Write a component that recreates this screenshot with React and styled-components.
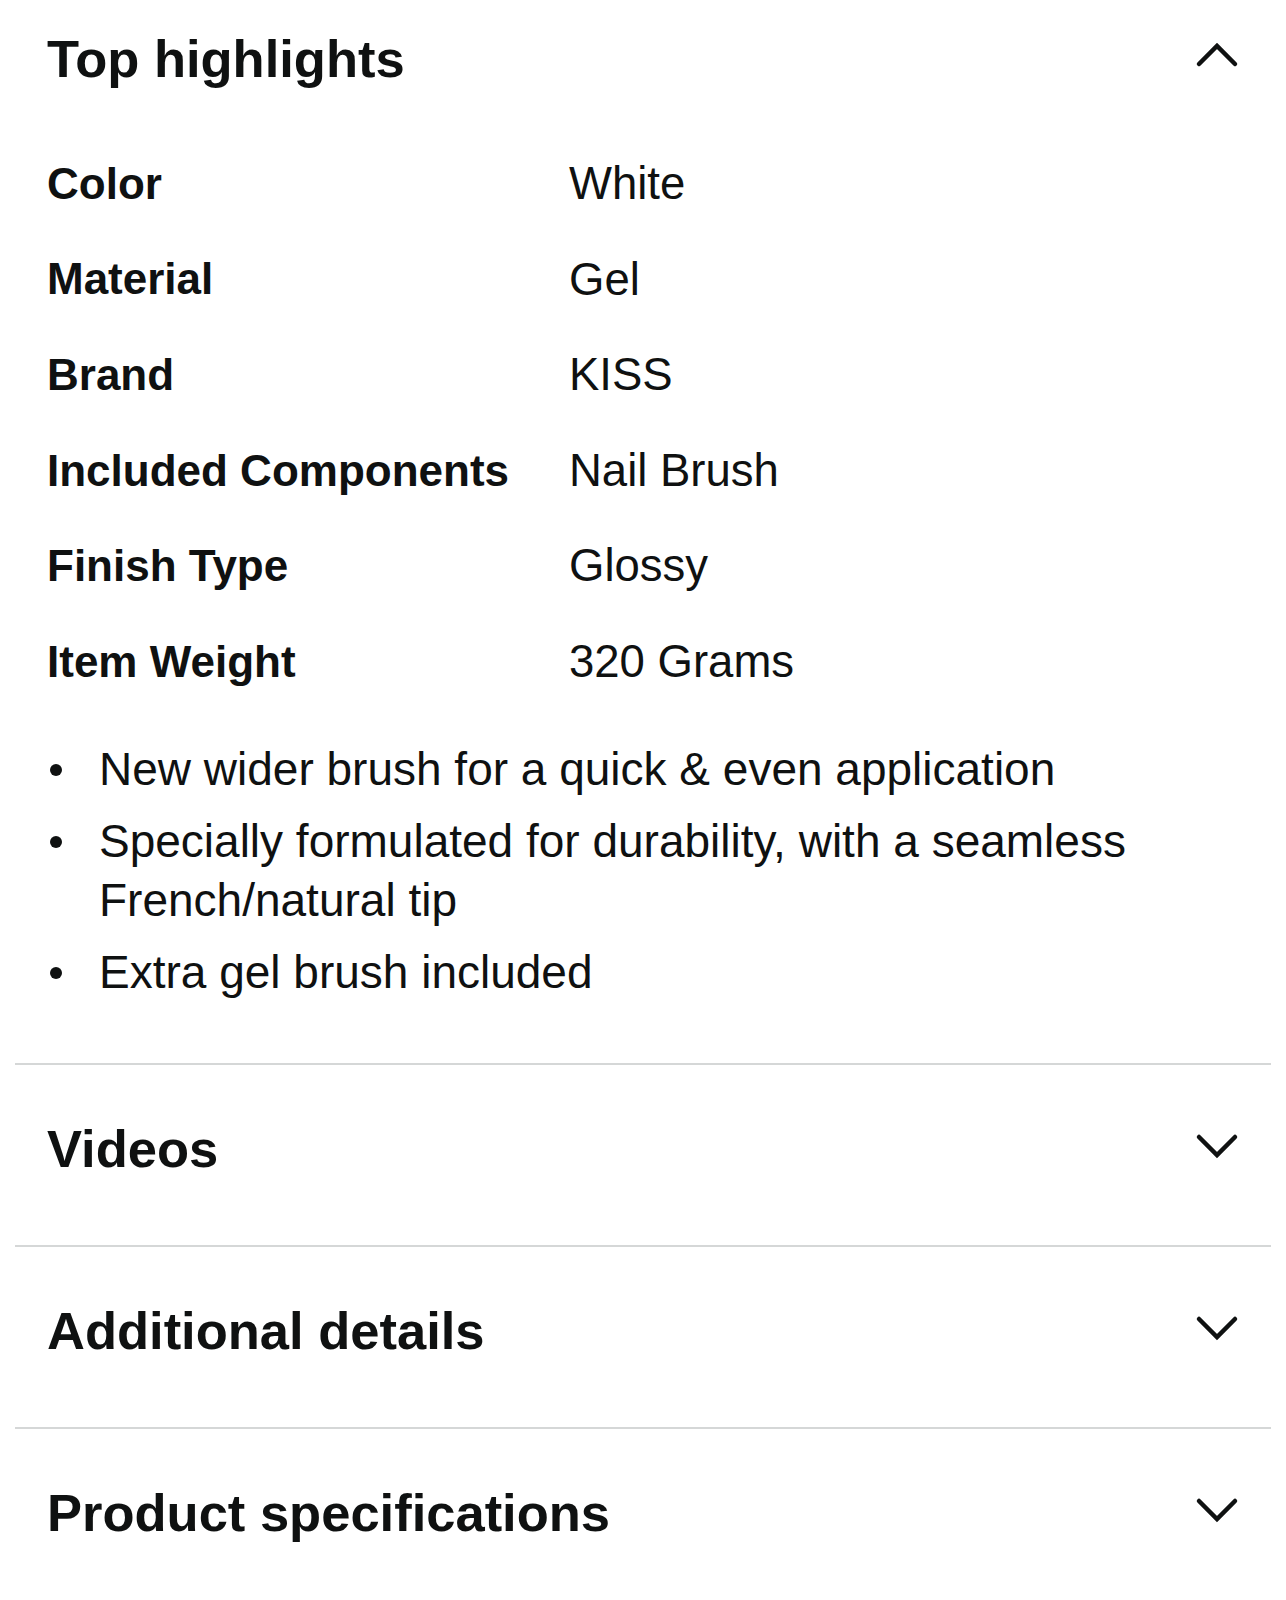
import React from "react";
import styled, { createGlobalStyle } from "styled-components";

const GlobalStyle = createGlobalStyle`
  * {
    box-sizing: border-box;
  }

  body {
    margin: 0;
    background: #ffffff;
    color: #0f1111;
    font-family: "Liberation Sans", Arial, sans-serif;
  }
`;

const Page = styled.main`
  width: 1286px;
  padding: 0 15px;
`;

const Section = styled.section`
  border-top: ${({ $first }) => ($first ? "none" : "2px solid #d5d7d7")};
  padding: 0 32px ${({ $open }) => ($open ? "61px" : "0")};
`;

const Header = styled.div`
  display: flex;
  align-items: center;
  justify-content: space-between;
  height: ${({ $open }) => ($open ? "116px" : "180px")};
  padding-bottom: ${({ $open }) => ($open ? "0" : "12px")};
`;

const Heading = styled.h2`
  margin: 0;
  font-size: 52.5px;
  font-weight: 700;
  line-height: 1.2;
  color: #0f1111;
`;

const Chevron = styled.svg`
  width: 44px;
  height: 28px;
  flex-shrink: 0;
  margin-top: ${({ $up }) => ($up ? "-8px" : "-6px")};
`;

const SpecTable = styled.div`
  margin-top: 20px;
  display: grid;
  grid-template-columns: 522px 1fr;
  grid-auto-rows: 95.6px;
  align-items: center;
`;

const Label = styled.div`
  font-size: 44px;
  font-weight: 700;
  line-height: 1;
`;

const Value = styled.div`
  font-size: 45.5px;
  font-weight: 400;
  line-height: 1;
`;

const Bullets = styled.ul`
  list-style: none;
  margin: 30px 0 0;
  padding: 0;
  display: flex;
  flex-direction: column;
  gap: 13px;
`;

const Bullet = styled.li`
  display: grid;
  grid-template-columns: 52px 1fr;
  font-size: 46px;
  line-height: 59px;
`;

const Dot = styled.span`
  display: flex;
  align-items: center;
  height: 59px;
  padding-top: 2px;

  &::before {
    content: "";
    width: 12px;
    height: 12px;
    margin-left: 3px;
    border-radius: 50%;
    background: #0f1111;
  }
`;

function ChevronIcon({ up }) {
  return (
    <Chevron $up={up} viewBox="0 0 44 28" aria-hidden="true">
      <polyline
        points={up ? "4,24 22,6 40,24" : "4,5 22,23 40,5"}
        fill="none"
        stroke="#0f1111"
        strokeWidth="4.5"
        strokeLinecap="round"
        strokeLinejoin="miter"
      />
    </Chevron>
  );
}

const specs = [
  ["Color", "White"],
  ["Material", "Gel"],
  ["Brand", "KISS"],
  ["Included Components", "Nail Brush"],
  ["Finish Type", "Glossy"],
  ["Item Weight", "320 Grams"],
];

const highlights = [
  "New wider brush for a quick & even application",
  "Specially formulated for durability, with a seamless French/natural tip",
  "Extra gel brush included",
];

const collapsed = ["Videos", "Additional details", "Product specifications"];

export default function App() {
  return (
    <>
      <GlobalStyle />
      <Page>
        <Section $first $open>
          <Header $open>
            <Heading>Top highlights</Heading>
            <ChevronIcon up />
          </Header>
          <SpecTable>
            {specs.map(([label, value]) => (
              <React.Fragment key={label}>
                <Label>{label}</Label>
                <Value>{value}</Value>
              </React.Fragment>
            ))}
          </SpecTable>
          <Bullets>
            {highlights.map((text) => (
              <Bullet key={text}>
                <Dot />
                <span>{text}</span>
              </Bullet>
            ))}
          </Bullets>
        </Section>
        {collapsed.map((title) => (
          <Section key={title}>
            <Header>
              <Heading>{title}</Heading>
              <ChevronIcon />
            </Header>
          </Section>
        ))}
      </Page>
    </>
  );
}
